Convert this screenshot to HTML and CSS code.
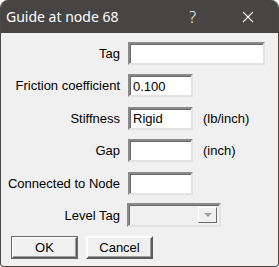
FILE: index.html
```html
<!DOCTYPE html>
<html lang="en">
<head>
    <meta charset="UTF-8">
    <title>Guide at node 68</title>
    <link rel="stylesheet" href="styles.css">
</head>
<body>
    <div class="dialog">
        <div class="titlebar">
            <span class="title">Guide at node 68</span>
            <span class="help">?</span>
            <svg class="close" width="12" height="12" viewBox="0 0 12 12">
                <path d="M1 1 L11 11 M11 1 L1 11" stroke="#ffffff" stroke-width="1.1" fill="none"/>
            </svg>
        </div>
        <div class="content">
            <form class="fields">
                <label for="tag">Tag</label>
                <input type="text" id="tag" class="wide">

                <label for="friction">Friction coefficient</label>
                <input type="text" id="friction" value="0.100">
                <span></span>

                <label for="stiffness">Stiffness</label>
                <input type="text" id="stiffness" value="Rigid">
                <span class="unit">(lb/inch)</span>

                <label for="gap">Gap</label>
                <input type="text" id="gap">
                <span class="unit">(inch)</span>

                <label for="node">Connected to Node</label>
                <input type="text" id="node">
                <span></span>

                <label>Level Tag</label>
                <div class="combo">
                    <span class="combo-value"></span>
                    <span class="combo-btn">
                        <svg width="8" height="5" viewBox="0 0 8 5"><path d="M0 0 L8 0 L4 4 Z" fill="#a0a0a0"/></svg>
                    </span>
                </div>
                <span></span>
            </form>
            <div class="buttons">
                <button type="button" class="btn default">OK</button>
                <button type="button" class="btn">Cancel</button>
            </div>
        </div>
    </div>
</body>
</html>
```

FILE: styles.css
```css
body {
    margin: 0;
    background-color: #ffffff;
    font-family: 'Liberation Sans', Arial, sans-serif;
}

.dialog {
    width: 279px;
    height: 267px;
    box-sizing: border-box;
    background-color: #f0f0f0;
    border: 1px solid #4a4846;
    border-top: none;
    border-radius: 8px 8px 4px 4px;
    overflow: hidden;
}

.titlebar {
    height: 33px;
    background-color: #474543;
    color: #ffffff;
    display: flex;
    align-items: center;
    font-family: 'Noto Sans', 'Open Sans', sans-serif;
    font-size: 14px;
}

.title {
    margin-left: 5px;
    flex: 1;
}

.help {
    margin-right: 46px;
    font-size: 16px;
    font-weight: 300;
}

.close {
    margin-right: 24px;
}

.content {
    padding-top: 9px;
}

.fields {
    display: grid;
    grid-template-columns: 119px 65px 1fr;
    grid-auto-rows: 23px;
    column-gap: 8px;
    row-gap: 9.4px;
    align-items: center;
    font-size: 13px;
    color: #000000;
}

.fields label {
    text-align: right;
}

.fields input {
    box-sizing: border-box;
    height: 23px;
    width: 65px;
    margin: 0;
    padding: 1px 3px 0 3px;
    font-family: 'Liberation Sans', Arial, sans-serif;
    font-size: 13px;
    background-color: #ffffff;
    border: 2px solid;
    border-color: #8a8a8a #e3e3e3 #e3e3e3 #8a8a8a;
    box-shadow: inset 1px 1px 0 #6a6a6a;
    outline: none;
}

.fields input.wide {
    width: 137px;
    grid-column: 2 / 4;
}

.unit {
    padding-left: 2px;
}

.combo {
    box-sizing: border-box;
    width: 94px;
    height: 24px;
    display: flex;
    justify-content: flex-end;
    padding: 2px;
    border: 2px solid;
    border-color: #8a8a8a #e3e3e3 #e3e3e3 #8a8a8a;
    box-shadow: inset 1px 1px 0 #6a6a6a;
    background-color: #f0f0f0;
    margin-left: -1px;
}

.combo-value {
    flex: 1;
}

.combo-btn {
    width: 19px;
    display: flex;
    align-items: center;
    justify-content: center;
    box-sizing: border-box;
    border: 1px solid;
    border-color: #ffffff #6a6a6a #6a6a6a #ffffff;
    background-color: #f0f0f0;
}

.buttons {
    display: flex;
    gap: 8px;
    padding: 9px 0 0 10px;
}

.btn {
    width: 67px;
    height: 23px;
    box-sizing: border-box;
    margin: 0;
    padding: 0;
    font-family: 'Liberation Sans', Arial, sans-serif;
    font-size: 13px;
    color: #000000;
    background-color: #f0f0f0;
    border: 2px solid;
    border-color: #ffffff #5a5a5a #5a5a5a #ffffff;
    box-shadow: inset -1px -1px 0 #a0a0a0;
}

.btn.default {
    outline: 1px solid #6a6a6a;
    outline-offset: -1px;
}
```
